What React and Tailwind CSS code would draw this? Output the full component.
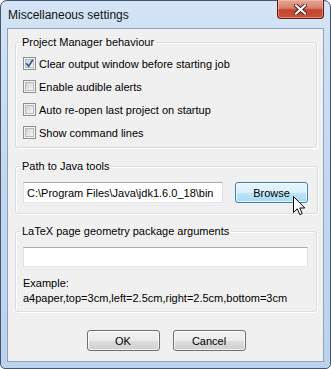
import React from "react";

function Checkbox({ checked }) {
  return (
    <span className="w-[13px] h-[13px] shrink-0 border border-[#8e8f8f] bg-[#f4f4f4] p-[1px] flex">
      <span className="flex-1 border border-[#b7bcc2] bg-gradient-to-br from-[#cdd1d6] to-[#f7f7f7] relative">
        {checked && (
          <svg className="absolute left-[-1px] top-[-1px]" width="9" height="9" viewBox="0 0 9 9">
            <path d="M1.3 4.3 L3.6 7.2 L7.8 0.8" fill="none" stroke="#3d5290" strokeWidth="1.7" />
          </svg>
        )}
      </span>
    </span>
  );
}

function Row({ label, checked }) {
  return (
    <div className="h-[23px] flex items-center gap-[3px] pl-[7px]">
      <Checkbox checked={checked} />
      <span className="whitespace-nowrap">{label}</span>
    </div>
  );
}

function Group({ title, children, className = "" }) {
  return (
    <fieldset className={"border border-[#d5dfe5] rounded-[3px] shadow-[inset_1px_1px_0_#ffffff,1px_1px_0_#ffffff] " + className}>
      <legend className="ml-[4px] px-[2px] leading-[16px] whitespace-nowrap">{title}</legend>
      {children}
    </fieldset>
  );
}

function Button({ children, hover, className = "" }) {
  return (
    <div
      className={
        "h-[21px] rounded-[3px] border flex items-center justify-center shadow-[inset_0_0_0_1px_rgba(255,255,255,0.75)] " +
        (hover
          ? "border-[#3c7fb1] bg-[linear-gradient(to_bottom,#eaf6fd_0%,#d9f0fc_50%,#bee6fd_50%,#a7d9f5_100%)] "
          : "border-[#707070] bg-[linear-gradient(to_bottom,#f2f2f2_0%,#ebebeb_50%,#dddddd_50%,#cfcfcf_100%)] ") +
        className
      }
    >
      {children}
    </div>
  );
}

export default function App() {
  return (
    <div className="relative w-[331px] h-[369px] bg-white font-['Liberation_Sans',Arial,sans-serif] text-[11px] text-black leading-[16px]">
      <div className="h-full flex flex-col rounded-t-[7px] rounded-b-[5px] border border-[#44546a] bg-gradient-to-b from-[#d4e4f6] via-[#c2d7ef] to-[#bcd3ee] px-[6px] pb-[6px]">
        <div className="h-[27px] pt-[6px] pl-[1px] text-[12px] text-[#111] whitespace-nowrap">Miscellaneous settings</div>
        <div className="flex-1 flex flex-col border border-[#8fa3bb] bg-[#f0f0f0] pl-[7px] pr-[6px]">
          <Group title="Project Manager behaviour" className="mt-[5px] pt-[2px] pb-[3px]">
            <Row label="Clear output window before starting job" checked />
            <Row label="Enable audible alerts" />
            <Row label="Auto re-open last project on startup" />
            <Row label="Show command lines" />
          </Group>
          <Group title="Path to Java tools" className="mt-[10px] pb-[10px]">
            <div className="mt-[8px] flex items-center pl-[7px] pr-[9px] gap-[12px]">
              <div className="w-[200px] h-[21px] bg-white border border-[#dbdfe6] border-t-[#abadb3] border-b-[#e3e9ef] pl-[3px] flex items-center whitespace-nowrap overflow-hidden">
                C:\Program Files\Java\jdk1.6.0_18\bin
              </div>
              <Button hover className="w-[73px]">Browse</Button>
            </div>
          </Group>
          <Group title="LaTeX page geometry package arguments" className="mt-[9px] pb-[5px]">
            <div className="mt-[8px] ml-[7px] w-[285px] h-[20px] bg-white border border-[#dbdfe6] border-t-[#abadb3] border-b-[#e3e9ef]" />
            <div className="mt-[9px] pl-[7px] leading-[15px] whitespace-nowrap">
              <div>Example:</div>
              <div>a4paper,top=3cm,left=2.5cm,right=2.5cm,bottom=3cm</div>
            </div>
          </Group>
          <div className="mt-[18px] flex justify-center gap-[13px]">
            <Button className="w-[73px]">OK</Button>
            <Button className="w-[73px]">Cancel</Button>
          </div>
        </div>
      </div>

      {/* Close button */}
      <div className="absolute left-[277px] top-0 w-[47px] h-[19px] rounded-b-[4px] border border-t-0 border-[#5b1d12] bg-[linear-gradient(to_bottom,#e6a898_0%,#d77e6c_45%,#c2442c_55%,#c9553a_100%)] shadow-[inset_0_0_0_1px_rgba(255,200,190,0.45)] flex items-center justify-center">
        <svg width="13" height="11" viewBox="0 0 13 11">
          <path d="M2 1.5 L11 9.5 M11 1.5 L2 9.5" stroke="#4a1a12" strokeWidth="4" strokeLinecap="square" />
          <path d="M2 1.5 L11 9.5 M11 1.5 L2 9.5" stroke="#ffffff" strokeWidth="2.2" strokeLinecap="square" />
        </svg>
      </div>

      {/* Mouse cursor */}
      <svg className="absolute left-[293px] top-[196px]" width="13" height="20" viewBox="0 0 13 20">
        <path d="M0.5 0.5 L0.5 16.5 L4.3 12.8 L6.8 18.6 L9.2 17.6 L6.8 12 L11.8 12 Z" fill="#ffffff" stroke="#000000" strokeWidth="1" strokeLinejoin="miter" />
      </svg>
    </div>
  );
}
